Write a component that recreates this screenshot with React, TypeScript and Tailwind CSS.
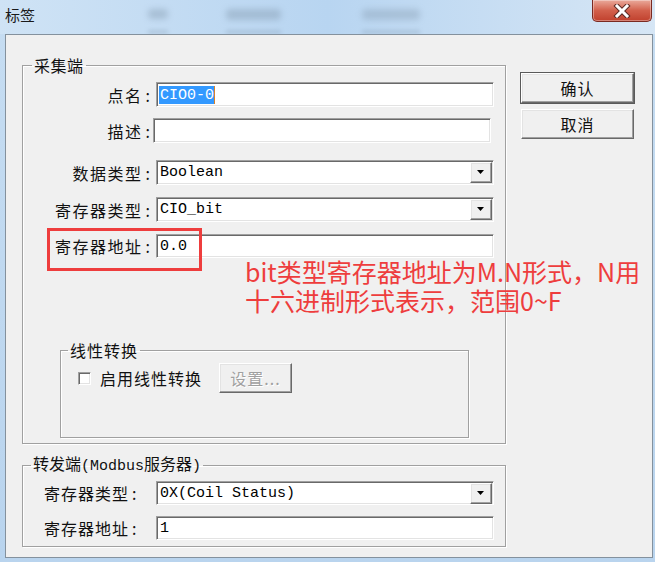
import React from "react";

const sunken =
  "border border-t-[#a0a0a0] border-l-[#a0a0a0] border-r-white border-b-white shadow-[inset_1px_1px_0_#696969,inset_-1px_-1px_0_#e3e3e3] bg-white";
const raised =
  "border border-t-white border-l-white border-r-[#696969] border-b-[#696969] shadow-[inset_-1px_-1px_0_#a0a0a0,inset_1px_1px_0_#e3e3e3] bg-[#f0f0f0]";
const group =
  "border border-[#a0a0a0] shadow-[inset_1px_1px_0_#fff,1px_1px_0_#fff]";
const mono = "font-['Liberation_Mono',monospace] text-[15px]";

function DropBtn() {
  return (
    <div className={`ml-auto mr-[1px] my-[1px] w-[22px] h-[21px] flex items-center justify-center ${raised}`}>
      <svg width="8" height="5" viewBox="0 0 8 5">
        <path d="M0 0 H7 L3.5 4 Z" fill="#000" />
      </svg>
    </div>
  );
}

function Field({ children, w = "w-[338px]", h = "h-[25px]", select = false }: { children?: React.ReactNode; w?: string; h?: string; select?: boolean }) {
  return (
    <div className={`${w} ${h} ${sunken} flex items-center pl-[3px] ${mono} text-black`}>
      <span className="whitespace-pre pt-[2px]">{children}</span>
      {select && <DropBtn />}
    </div>
  );
}

function Label({ text, right = true }: { text: string; right?: boolean }) {
  return right ? (
    <div className="w-[127px] text-right leading-none whitespace-pre">
      <span className="tracking-[1.5px]">{text}</span>
      <span className="ml-[3px]">:</span>
    </div>
  ) : (
    <div className="w-[133px] pl-[21px] leading-none whitespace-pre">
      <span className="tracking-[1px]">{text}</span>
      <span className="ml-[3px]">:</span>
    </div>
  );
}

export default function App() {
  return (
    <div className="w-[655px] h-[562px] overflow-hidden flex flex-col bg-gradient-to-b from-[#c6ddf2] to-[#b9d4ee] font-['Noto_Sans_CJK_SC','Noto_Sans',sans-serif] text-[16px] text-[#111]">
      {/* title bar */}
      <div className="relative h-[34px] flex items-start bg-gradient-to-r from-[#cfe3f5] via-[#b8d5f1] to-[#d6e6f5]">
        <div className="absolute left-[148px] top-[9px] w-[20px] h-[10px] bg-[#7d93a8] opacity-40 blur-[3px] rounded" />
        <div className="absolute left-[226px] top-[9px] w-[55px] h-[11px] bg-[#7d93a8] opacity-40 blur-[3px] rounded" />
        <div className="absolute left-[362px] top-[9px] w-[58px] h-[11px] bg-[#7d93a8] opacity-35 blur-[3px] rounded" />
        <div className="absolute left-[148px] top-[30px] w-[20px] h-[4px] bg-[#7d93a8] opacity-30 blur-[2px]" />
        <div className="absolute left-[226px] top-[30px] w-[55px] h-[4px] bg-[#7d93a8] opacity-30 blur-[2px]" />
        <div className="absolute left-[362px] top-[30px] w-[58px] h-[4px] bg-[#7d93a8] opacity-30 blur-[2px]" />
        <span className="relative pl-[5px] pt-[5px] text-[15px] leading-[20px] text-[#1a1a1a]">标签</span>
        <div className="relative ml-auto mr-[3px] w-[60px] h-[22px] rounded-b-[5px] border border-t-0 border-[#7a2a22] bg-gradient-to-b from-[#e9a99b] via-[#d2604c] to-[#c0402d] shadow-[inset_0_0_0_1px_rgba(255,255,255,0.35)] flex items-center justify-center">
          <svg width="18" height="14" viewBox="0 0 18 14">
            <path d="M4 2 L14 12 M14 2 L4 12" stroke="#5a2a24" strokeWidth="5" strokeLinecap="square" />
            <path d="M4 2 L14 12 M14 2 L4 12" stroke="#fff" strokeWidth="3" strokeLinecap="square" />
          </svg>
        </div>
      </div>

      {/* client area */}
      <div className="relative ml-[5px] w-[648px] h-[524px] border border-[#84919d] bg-[#f0f0f0] flex items-start">
        {/* left column */}
        <div className="ml-[16px] mt-[20px] flex flex-col">
          <fieldset className={`w-[484px] h-[389px] ${group}`}>
            <legend className="ml-[9px] px-[2px] leading-[20px] tracking-[0.5px]">采集端</legend>
            <div className="flex items-center mt-[7px]">
              <Label text="点名" />
              <div className={`ml-[6px] w-[338px] h-[25px] ${sunken} flex items-center pl-[2px] ${mono}`}>
                <span className="bg-[#3399ff] text-white h-[18px] leading-[19px] pl-[1px] border-r border-[#d9822b]">CIO0-0</span>
              </div>
            </div>
            <div className="flex items-center mt-[11px]">
              <Label text="描述" />
              <div className="ml-[3px]">
                <Field />
              </div>
            </div>
            <div className="flex items-center mt-[17px]">
              <Label text="数据类型" />
              <div className="ml-[6px]">
                <Field select>Boolean</Field>
              </div>
            </div>
            <div className="flex items-center mt-[12px]">
              <Label text="寄存器类型" />
              <div className="ml-[6px]">
                <Field select>CIO_bit</Field>
              </div>
            </div>
            <div className="flex items-center mt-[12px]">
              <Label text="寄存器地址" />
              <div className="ml-[6px]">
                <Field h="h-[24px]">0.0</Field>
              </div>
            </div>

            <fieldset className={`ml-[37px] mt-[82px] w-[409px] h-[98px] ${group}`}>
              <legend className="ml-[7px] px-[2px] leading-[20px] tracking-[1px]">线性转换</legend>
              <div className="flex items-center mt-[3px]">
                <div className={`ml-[17px] w-[13px] h-[13px] ${sunken}`} />
                <span className="ml-[9px] leading-none tracking-[1px]">启用线性转换</span>
                <div className={`ml-[17px] w-[73px] h-[30px] ${raised} flex items-center justify-center text-[#a0a0a0] tracking-[1px] [text-shadow:1px_1px_0_#fff]`}>
                  设置...
                </div>
              </div>
            </fieldset>
          </fieldset>

          <fieldset className={`mt-[9px] w-[484px] h-[94px] ${group}`}>
            <legend className="ml-[8px] px-[2px] leading-[20px] whitespace-pre">
              转发端<span className={mono}>(Modbus</span>服务器<span className={mono}>)</span>
            </legend>
            <div className="flex items-center mt-[4px]">
              <Label text="寄存器类型" right={false} />
              <Field select h="h-[24px]">0X(Coil Status)</Field>
            </div>
            <div className="flex items-center mt-[11px]">
              <Label text="寄存器地址" right={false} />
              <Field h="h-[24px]">1</Field>
            </div>
          </fieldset>
        </div>

        {/* right column buttons */}
        <div className="ml-[15px] mt-[38px] flex flex-col gap-[6px]">
          <div className={`w-[113px] h-[30px] ${raised} ring-1 ring-[#5a5a5a] flex items-center justify-center tracking-[1px]`}>确认</div>
          <div className={`w-[113px] h-[30px] ${raised} flex items-center justify-center tracking-[1px]`}>取消</div>
        </div>

        {/* red annotation overlay */}
        <div className="absolute left-[41px] top-[193px] w-[155px] h-[43px] border-[3px] border-[#ee3d3d]" />
        <div className="absolute left-[239px] top-[222px] text-[25px] leading-[29px] text-[#ee3d3d] whitespace-pre">
          {"bit类型寄存器地址为M.N形式，N用\n十六进制形式表示，范围0~F"}
        </div>
      </div>
    </div>
  );
}
